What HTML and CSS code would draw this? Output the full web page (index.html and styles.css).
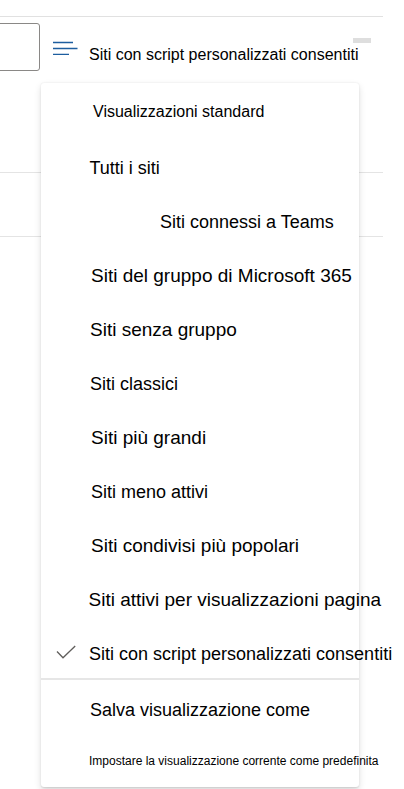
FILE: index.html
```html
<!DOCTYPE html>
<html lang="it">
<head>
<meta charset="utf-8">
<title>Visualizzazioni siti</title>
<link rel="stylesheet" href="styles.css">
</head>
<body>
<div class="page">
  <div class="rule"></div>
  <div class="toolbar">
    <div class="search"></div>
    <svg class="view-icon" width="26" height="14" viewBox="0 0 26 14" aria-hidden="true">
      <path d="M1 1.5H21M1 7.5H25.5M1 13.5H17" stroke="#1d5e9f" stroke-width="1.4" fill="none"/>
    </svg>
    <span class="view-label">Siti con script personalizzati consentiti</span>
    <span class="grip"></span>
  </div>
  <div class="rows">
    <div class="row"></div>
    <div class="row"></div>
  </div>

  <div class="menu" role="menu">
    <div class="menu-header">Visualizzazioni standard</div>
    <div class="item item-tutti">Tutti i siti</div>
    <div class="item item-teams">Siti connessi a Teams</div>
    <div class="item item-lg item-b">Siti del gruppo di Microsoft 365</div>
    <div class="item item-lg">Siti senza gruppo</div>
    <div class="item">Siti classici</div>
    <div class="item item-lg item-b">Siti più grandi</div>
    <div class="item item-b">Siti meno attivi</div>
    <div class="item item-lg item-b">Siti condivisi più popolari</div>
    <div class="item item-lg item-a">Siti attivi per visualizzazioni pagina</div>
    <div class="item item-checked">
      <svg class="check" width="20" height="15" viewBox="0 0 20 15" aria-hidden="true">
        <path d="M1 6.5L7 12.8L19.2 1" stroke="#605e5c" stroke-width="1.3" fill="none"/>
      </svg>
      Siti con script personalizzati consentiti
    </div>
    <div class="divider"></div>
    <div class="item item-save">Salva visualizzazione come</div>
    <div class="item-default">Impostare la visualizzazione corrente come predefinita</div>
  </div>
</div>
</body>
</html>
```

FILE: styles.css
```css
html, body {
  margin: 0;
  padding: 0;
  background: #ffffff;
}

body {
  font-family: "Liberation Sans", Arial, sans-serif;
  color: #000000;
  width: 404px;
  height: 789px;
  overflow: hidden;
}

.page {
  position: relative;
  width: 404px;
  height: 789px;
}

.rule {
  width: 383px;
  height: 16px;
  border-bottom: 1px solid #e1e1e1;
}

.toolbar {
  position: relative;
  display: flex;
  align-items: flex-start;
  margin-top: 6px;
  height: 48px;
}

.search {
  box-sizing: border-box;
  width: 200px;
  height: 48px;
  margin-left: -160px;
  border: 1px solid #8a8886;
  border-radius: 3px;
  flex: none;
}

.view-icon {
  flex: none;
  margin-left: 12px;
  margin-top: 18px;
}

.view-label {
  margin-left: 11px;
  margin-top: 22px;
  font-size: 16px;
  line-height: 20px;
  white-space: nowrap;
  color: #000000;
}

.grip {
  position: absolute;
  left: 353px;
  top: 15px;
  width: 18px;
  height: 5px;
  background: #dedede;
}

.rows {
  margin-top: 101px;
  width: 383px;
}

.row {
  box-sizing: border-box;
  height: 64px;
  border-top: 1px solid #e4e4e4;
}

.menu {
  position: absolute;
  left: 41px;
  top: 83px;
  width: 318px;
  height: 704px;
  background: #ffffff;
  border-radius: 3px;
  box-shadow: 0 3.2px 7.2px rgba(0, 0, 0, 0.13), 0 0.6px 1.8px rgba(0, 0, 0, 0.11);
  display: flex;
  flex-direction: column;
}

.menu-header {
  height: 58px;
  line-height: 58px;
  padding-left: 52px;
  font-size: 16px;
  white-space: nowrap;
}

.item {
  position: relative;
  height: 54px;
  line-height: 54px;
  padding-left: 49px;
  font-size: 18px;
  white-space: nowrap;
  flex: none;
}

.item-lg { font-size: 19px; }
.item-tutti { padding-left: 48.5px; }
.item-teams { padding-left: 119px; }
.item-b { padding-left: 50px; }
.item-a { padding-left: 47.5px; }

.item-checked {
  padding-left: 48px;
  height: 51px;
}

.check {
  position: absolute;
  left: 15px;
  top: 18px;
}

.divider {
  height: 2px;
  background: #e6e6e6;
  flex: none;
}

.item-save {
  height: 60px;
  line-height: 60px;
  padding-left: 49px;
}

.item-default {
  height: 42px;
  line-height: 42px;
  padding-left: 48px;
  font-size: 12px;
  white-space: nowrap;
}
```
